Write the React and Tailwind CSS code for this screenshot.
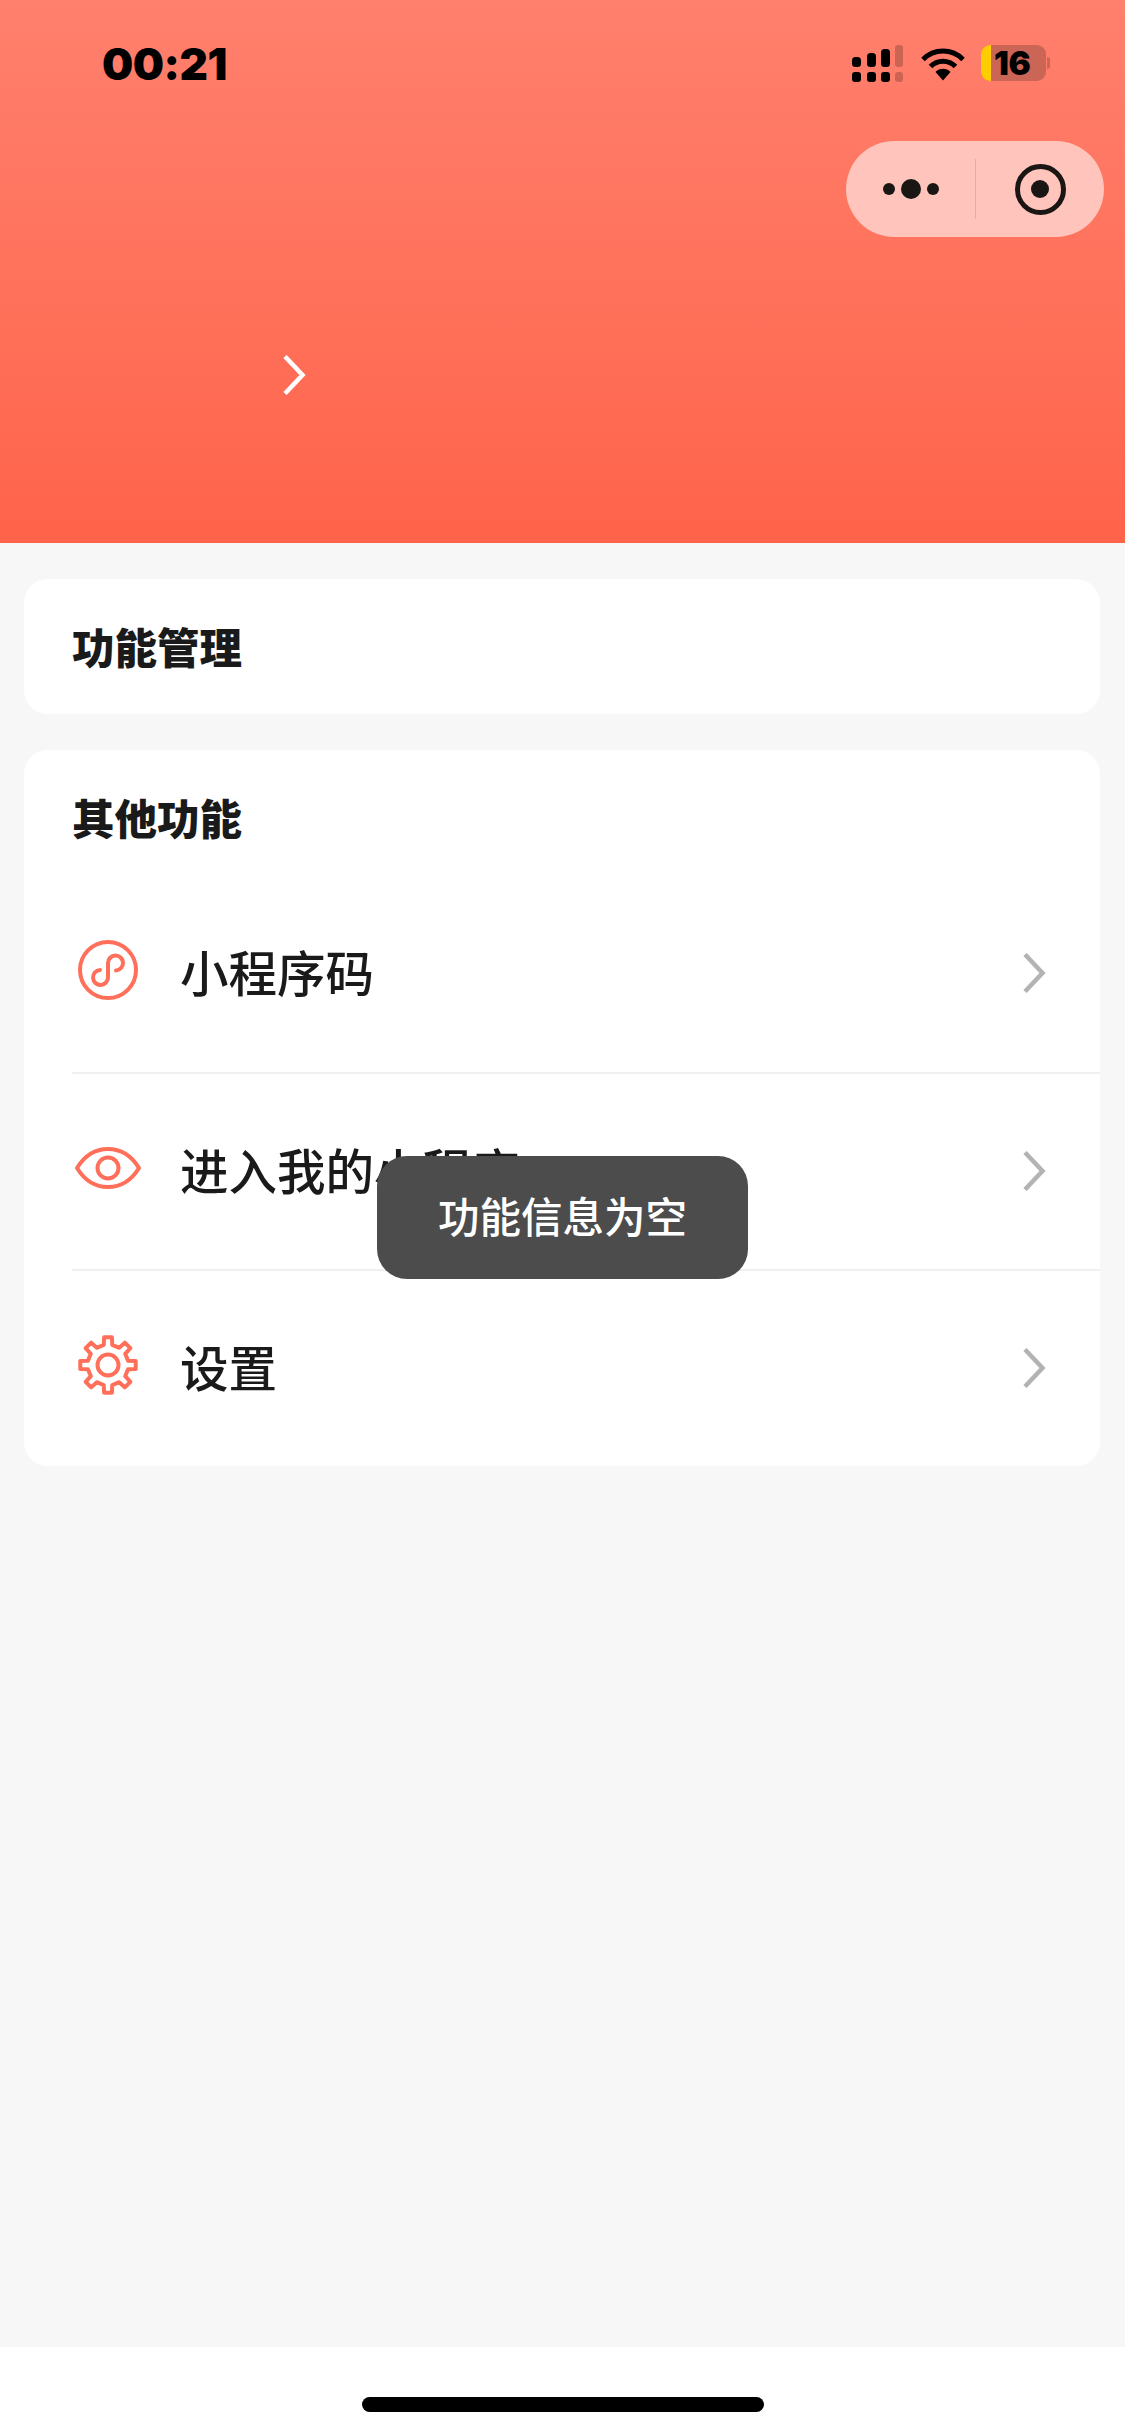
const gearPath = (() => {
  const pt = (r, deg) => {
    const a = (deg * Math.PI) / 180;
    return `${(30 + r * Math.sin(a)).toFixed(2)} ${(30 - r * Math.cos(a)).toFixed(2)}`;
  };
  let d = '';
  for (let i = 0; i < 8; i++) {
    const t = i * 45;
    d += `${i === 0 ? 'M' : 'L'}${pt(20.5, t - 12)} L${pt(28, t - 8)} L${pt(28, t + 8)} L${pt(20.5, t + 12)} `;
  }
  return d + 'Z';
})();

function SignalIcon() {
  return (
    <svg width="52" height="38" viewBox="0 0 52 38" className="block">
      <rect x="0" y="12" width="9" height="10" rx="3.5" fill="#000" />
      <rect x="15" y="8" width="9" height="14" rx="3.5" fill="#000" />
      <rect x="29" y="4" width="9" height="18" rx="3.5" fill="#000" />
      <rect x="43" y="0" width="8" height="22" rx="3" fill="#000" fillOpacity="0.2" />
      <rect x="0" y="27" width="9" height="10" rx="3" fill="#000" />
      <rect x="15" y="27" width="9" height="10" rx="3" fill="#000" />
      <rect x="29" y="27" width="9" height="10" rx="3" fill="#000" />
      <rect x="43" y="27" width="8" height="10" rx="3" fill="#000" fillOpacity="0.2" />
    </svg>
  );
}

function WifiIcon() {
  return (
    <svg width="46" height="34" viewBox="0 0 46 34" className="block">
      <path d="M3 12.5 A28 28 0 0 1 43 12.5" fill="none" stroke="#000" strokeWidth="5" />
      <path d="M10.5 19.5 A17.5 17.5 0 0 1 35.5 19.5" fill="none" stroke="#000" strokeWidth="5" />
      <path d="M15.5 25 L23 33.5 L30.5 25 A10.5 10.5 0 0 0 15.5 25 Z" fill="#000" />
    </svg>
  );
}

function Battery() {
  return (
    <div className="flex items-center">
      <div className="w-[65px] h-[36px] rounded-[9px] bg-[#cb6656] flex items-center">
        <div className="w-[10px] h-full rounded-l-[9px] bg-[#ffcc00]" />
        <span className="ml-[3px] text-[33px] leading-none font-black tracking-[-0.5px] text-black font-['Inter',sans-serif]">16</span>
      </div>
      <div className="w-[3px] h-[12px] ml-[1px] rounded-r-full bg-[#cb6656]" />
    </div>
  );
}

function MiniIcon() {
  return (
    <svg width="60" height="60" viewBox="0 0 60 60" fill="none" stroke="#ff6f5a" strokeWidth="4" strokeLinecap="round">
      <circle cx="30" cy="30" r="28" />
      <path d="M22 30 A7.5 7.5 0 1 0 30 37 V23 A7.5 7.5 0 1 1 38 30.5" />
    </svg>
  );
}

function EyeIcon() {
  return (
    <svg width="66" height="42" viewBox="0 0 66 42" fill="none" stroke="#ff6f5a" strokeWidth="4" strokeLinejoin="round">
      <path d="M2 21 C10 8 21 2 33 2 C45 2 56 8 64 21 C56 34 45 40 33 40 C21 40 10 34 2 21 Z" />
      <circle cx="33" cy="21" r="10.5" />
    </svg>
  );
}

function GearIcon() {
  return (
    <svg width="60" height="60" viewBox="0 0 60 60" fill="none" stroke="#ff6f5a" strokeWidth="4" strokeLinejoin="round">
      <path d={gearPath} />
      <circle cx="30" cy="30" r="10.5" />
    </svg>
  );
}

function Chevron({ color = '#b3b3b3', width = 4.5 }) {
  return (
    <svg width="24" height="40" viewBox="0 0 24 40" fill="none" stroke={color} strokeWidth={width}>
      <path d="M3 1.5 L20.5 20 L3 38.5" />
    </svg>
  );
}

const rows = [
  { label: '小程序码', icon: <MiniIcon /> },
  { label: '进入我的小程序', icon: <EyeIcon /> },
  { label: '设置', icon: <GearIcon /> },
];

export default function App() {
  return (
    <div className="relative w-[1125px] h-[2436px] flex flex-col bg-[#f7f7f7] overflow-hidden font-['Noto_Sans_CJK_SC','Liberation_Sans',sans-serif]">
      {/* header */}
      <div className="h-[543px] shrink-0 bg-gradient-to-b from-[#ff806d] to-[#ff634a]">
        <div className="flex items-start justify-between pt-[45px] pl-[102px] pr-[75px] h-[141px]">
          <span className="text-[44px] leading-[38px] font-black tracking-[-0.5px] text-black font-['Inter',sans-serif]">00:21</span>
          <div className="flex items-start gap-[15.5px]">
            <SignalIcon />
            <div className="mt-[2px]">
              <WifiIcon />
            </div>
            <Battery />
          </div>
        </div>

        <div className="flex justify-end pr-[21px]">
          <div className="w-[258px] h-[96px] rounded-full bg-[#ffc4bb] flex items-center">
            <div className="w-[129px] flex items-center justify-center gap-[6px] pl-[1px]">
              <span className="w-[12px] h-[12px] rounded-full bg-[#1a1613]" />
              <span className="w-[20px] h-[20px] rounded-full bg-[#1a1613]" />
              <span className="w-[12px] h-[12px] rounded-full bg-[#1a1613]" />
            </div>
            <div className="w-px h-[60px] bg-[#e8aca2]" />
            <div className="flex-1 flex items-center justify-center">
              <div className="w-[51px] h-[51px] rounded-full border-[5px] border-[#1a1613] flex items-center justify-center">
                <span className="w-[18px] h-[18px] rounded-full bg-[#1a1613]" />
              </div>
            </div>
          </div>
        </div>

        <div className="ml-[282px] mt-[118px] w-fit">
          <Chevron color="#ffffff" />
        </div>
      </div>

      {/* cards */}
      <div className="flex-1 px-[24px] pt-[36px] pr-[25px]">
        <div className="bg-white rounded-[24px] h-[135px] pl-[48px] pt-[43px]">
          <h2 className="text-[42.5px] leading-[48px] font-black text-[#1a1a1a]">功能管理</h2>
        </div>

        <div className="bg-white rounded-[24px] mt-[36px] pl-[48px]">
          <h2 className="text-[42.5px] leading-[48px] font-black text-[#1a1a1a] pt-[43px] pb-[34px]">其他功能</h2>
          {rows.map((row, i) => (
            <div
              key={row.label}
              className={`flex items-center h-[197px] pr-[54px] ${i > 0 ? 'border-t-2 border-[#f0f0f0]' : ''}`}
            >
              <div className="w-[72px] flex justify-center mb-[7px]">{row.icon}</div>
              <span className="ml-[36px] mb-[5px] flex-1 text-[48.5px] leading-[60px] font-medium text-[#1a1a1a]">{row.label}</span>
              <div className="mb-[2px]">
                <Chevron />
              </div>
            </div>
          ))}
        </div>
      </div>

      {/* home indicator */}
      <div className="h-[89px] shrink-0 bg-white flex justify-center pt-[50px]">
        <div className="w-[402px] h-[15px] rounded-full bg-black" />
      </div>

      {/* toast */}
      <div className="absolute left-[377px] top-[1156px] w-[371px] h-[123px] rounded-[30px] bg-[#4c4c4c] flex items-center justify-center">
        <span className="text-[41.5px] leading-none font-medium text-white mb-[3px]">功能信息为空</span>
      </div>
    </div>
  );
}
